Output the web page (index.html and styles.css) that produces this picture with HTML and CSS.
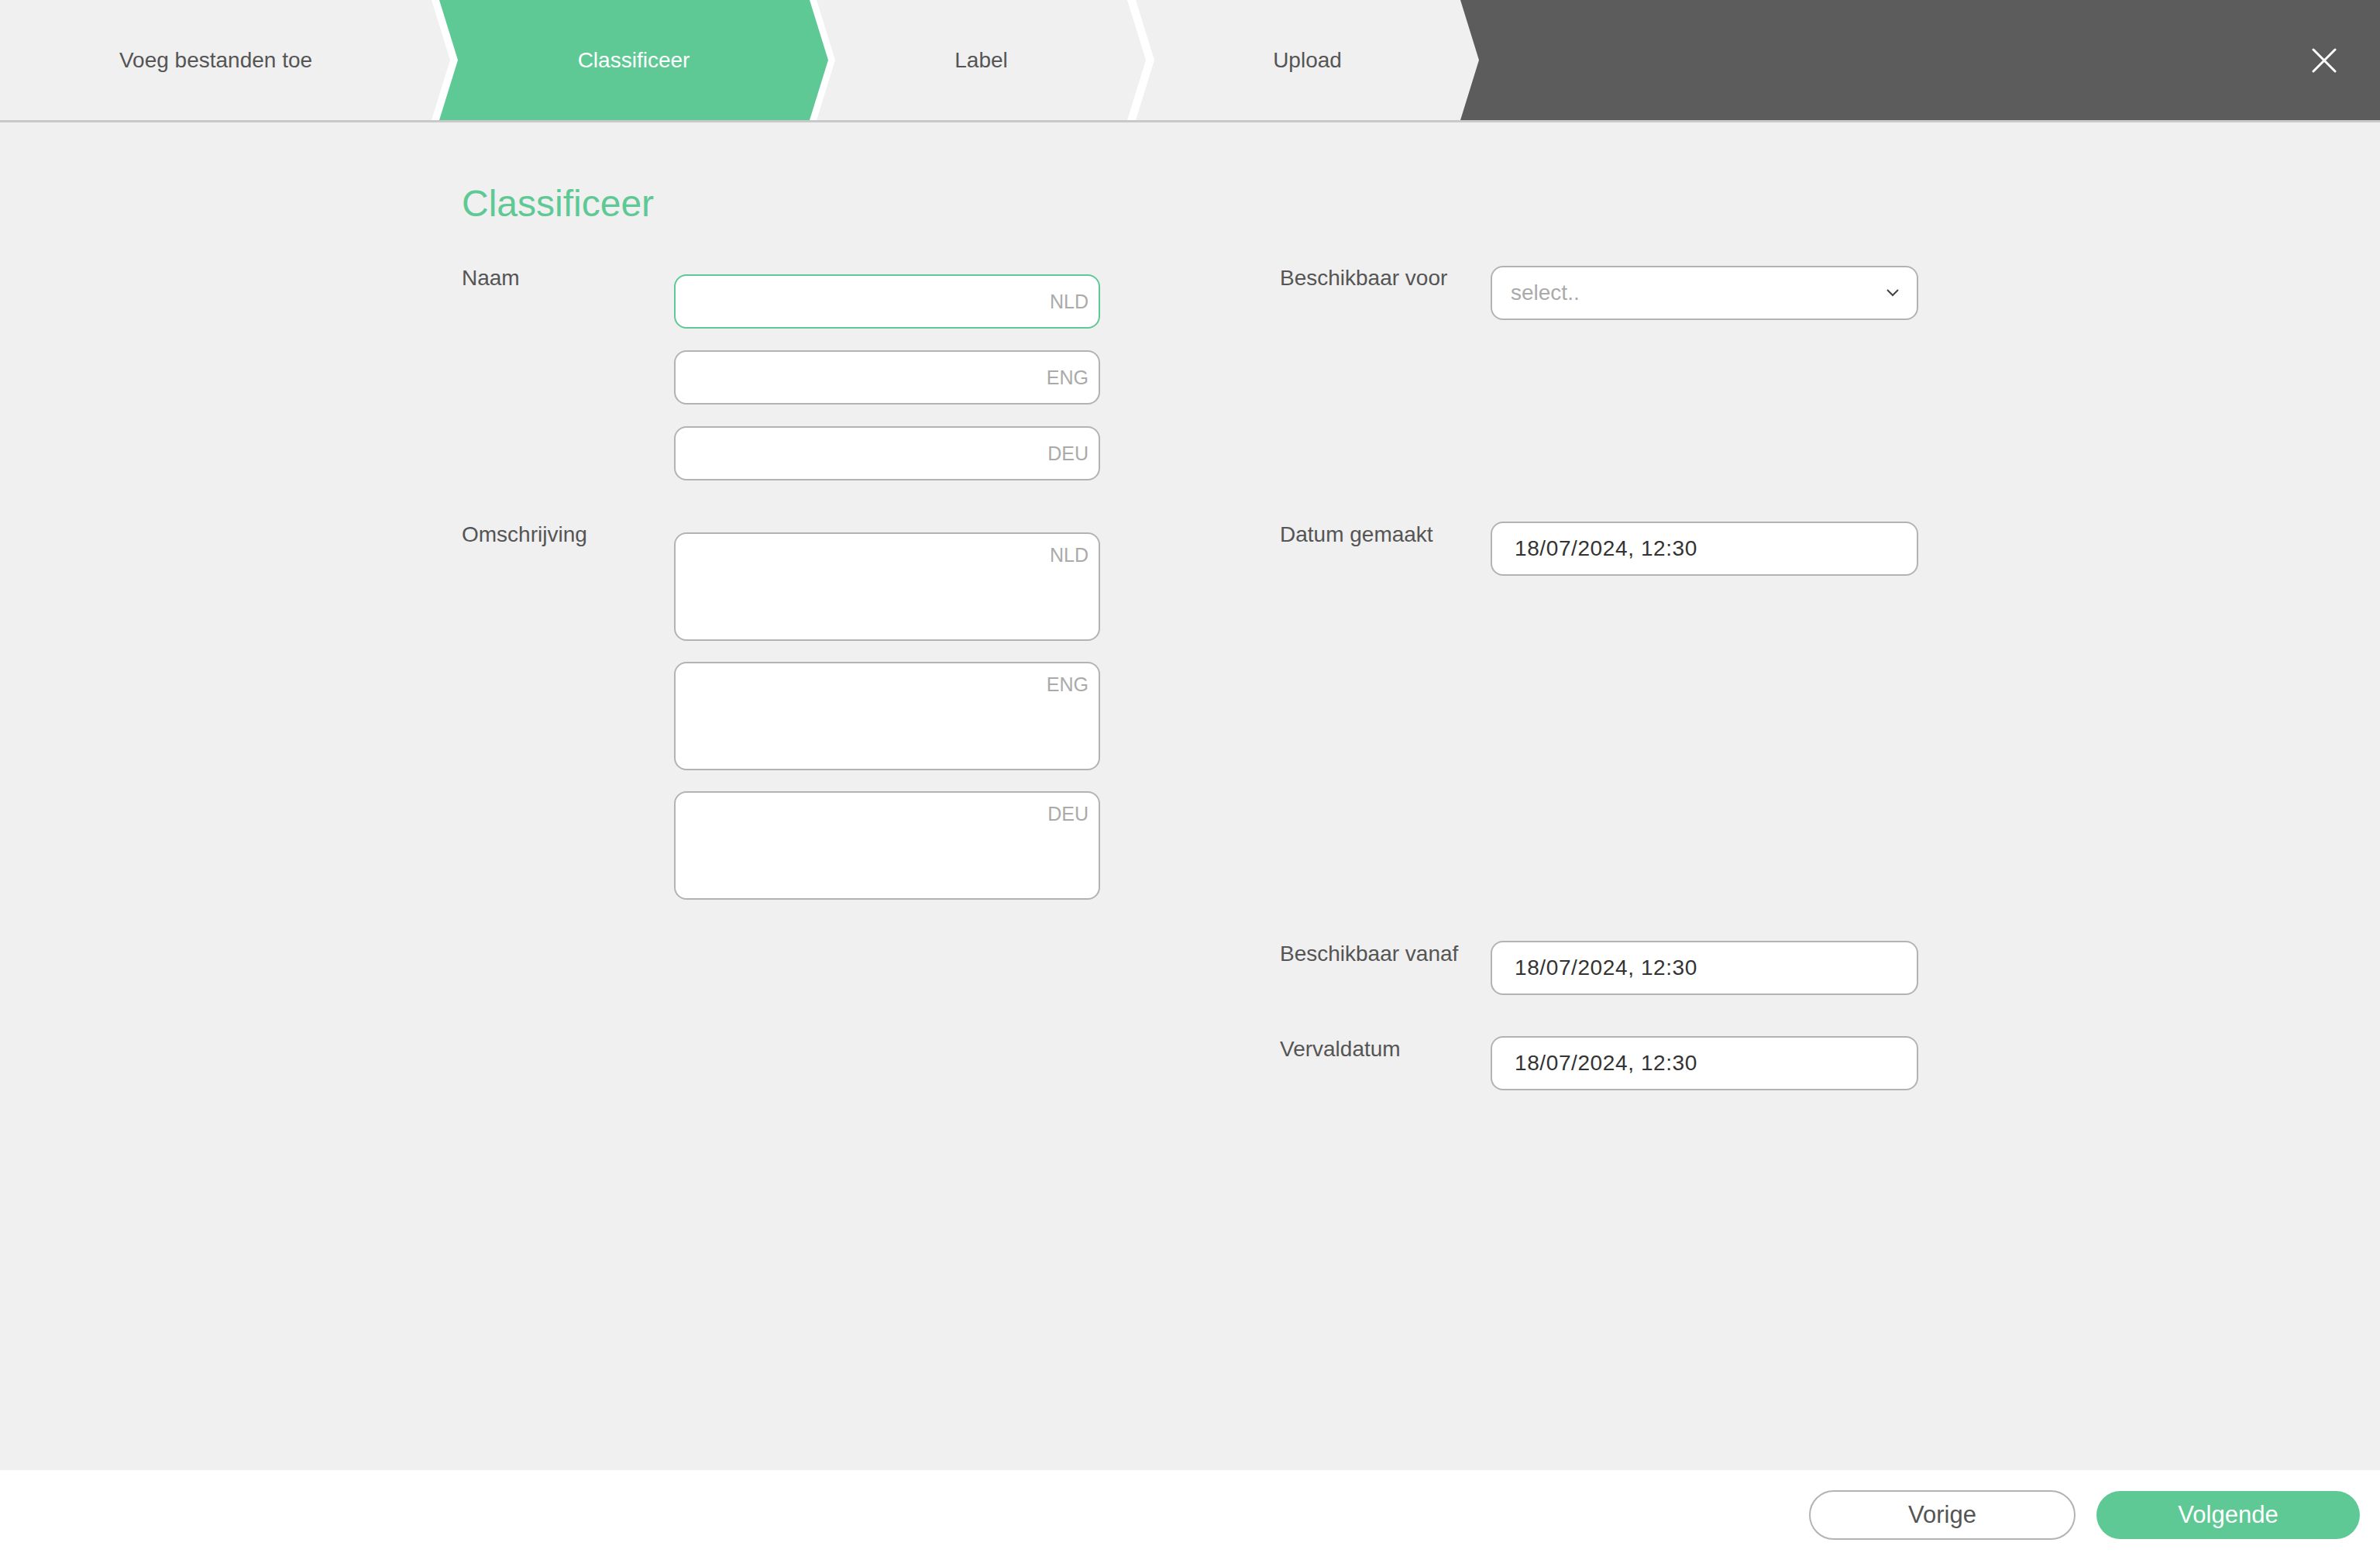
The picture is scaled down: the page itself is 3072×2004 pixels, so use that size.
FILE: index.html
```html
<!DOCTYPE html>
<html lang="nl">
<head>
    <meta charset="UTF-8" />
    <meta name="viewport" content="width=device-width, initial-scale=1.0"/>
    <title>Classificeer</title>
    <link rel="stylesheet" href="styles.css">
</head>
<body>
<div class="wizard">

    <!-- stappen -->
    <div class="steps">
        <div class="step step-first">Voeg bestanden toe</div>
        <div class="step step-active">Classificeer</div>
        <div class="step step-label">Label</div>
        <div class="step step-upload">Upload</div>
        <div class="steps-end">
            <button class="close-btn" aria-label="Sluiten">
                <svg width="32" height="32" viewBox="0 0 32 32">
                    <path d="M2 2 L30 30 M30 2 L2 30" stroke="#fff" stroke-width="3" stroke-linecap="round" fill="none"/>
                </svg>
            </button>
        </div>
    </div>

    <!-- formulier -->
    <div class="content">
        <div class="container">
            <h2 class="page-title">Classificeer</h2>

            <div class="form-grid">
                <div class="form-col">
                    <div class="field-row">
                        <label class="field-label">Naam</label>
                        <div class="field-stack stack-naam">
                            <input class="field field-focus" type="text" placeholder="NLD">
                            <input class="field" type="text" placeholder="ENG">
                            <input class="field" type="text" placeholder="DEU">
                        </div>
                    </div>
                    <div class="field-row row-omschrijving">
                        <label class="field-label">Omschrijving</label>
                        <div class="field-stack stack-omschrijving">
                            <textarea class="field field-area" placeholder="NLD"></textarea>
                            <textarea class="field field-area" placeholder="ENG"></textarea>
                            <textarea class="field field-area" placeholder="DEU"></textarea>
                        </div>
                    </div>
                </div>

                <div class="form-col">
                    <div class="field-row field-row-right">
                        <label class="field-label">Beschikbaar voor</label>
                        <div class="select-box">
                            <span>select..</span>
                            <svg width="16" height="10" viewBox="0 0 16 10">
                                <path d="M1 1 L8 8 L15 1" stroke="#444" stroke-width="2" fill="none"/>
                            </svg>
                        </div>
                    </div>
                    <div class="field-row field-row-right row-datum">
                        <label class="field-label">Datum gemaakt</label>
                        <input class="field field-date" type="text" value="18/07/2024, 12:30">
                    </div>
                    <div class="field-row field-row-right row-vanaf">
                        <label class="field-label">Beschikbaar vanaf</label>
                        <input class="field field-date" type="text" value="18/07/2024, 12:30">
                    </div>
                    <div class="field-row field-row-right row-verval">
                        <label class="field-label">Vervaldatum</label>
                        <input class="field field-date" type="text" value="18/07/2024, 12:30">
                    </div>
                </div>
            </div>
        </div>
    </div>

    <!-- knoppen -->
    <div class="footer">
        <button class="btn btn-prev">Vorige</button>
        <button class="btn btn-next">Volgende</button>
    </div>
</div>
</body>
</html>
```

FILE: styles.css
```css
/* wizard: classificeer */
*{box-sizing:border-box;}
body{margin:0;background:#f0f0f0;font-family:"Liberation Sans",Arial,sans-serif;color:#555;}
.wizard{display:flex;flex-direction:column;height:100vh;}

/* stappenbalk */
.steps{display:flex;height:158px;background:#fff;border-bottom:3px solid #c9c9c9;}
.step{display:flex;align-items:center;justify-content:center;background:#f0f0f0;font-size:28px;color:#555;
    clip-path:polygon(0 0,calc(100% - 24px) 0,100% 50%,calc(100% - 24px) 100%,0 100%,24px 50%);}
.step-first{width:581px;padding-right:24px;clip-path:polygon(0 0,calc(100% - 24px) 0,100% 50%,calc(100% - 24px) 100%,0 100%);}
.step-active{width:502px;margin-left:-14px;background:#5ec994;color:#fff;}
.step-label{width:425px;margin-left:-15px;}
.step-upload{width:443px;margin-left:-13px;clip-path:polygon(0 0,100% 0,100% 100%,0 100%,24px 50%);}
.steps-end{flex:1;margin-left:-24px;background:#5c5c5c;display:flex;align-items:center;justify-content:flex-end;padding-right:56px;
    clip-path:polygon(0 0,100% 0,100% 100%,0 100%,24px 50%);}
.close-btn{background:none;border:0;padding:0;display:flex;cursor:pointer;}

/* inhoud */
.content{flex:1;padding-top:77px;}
.container{width:1880px;margin:0 auto;}
.page-title{margin:0;font-size:48px;line-height:56px;font-weight:400;color:#5ec994;}
.form-grid{display:grid;grid-template-columns:824px 824px;column-gap:232px;margin-top:51px;}
.field-row{display:grid;grid-template-columns:274px 550px;align-items:start;}
.field-row-right{grid-template-columns:272px 552px;}
.field-label{font-size:28px;line-height:34px;color:#555;}
.field-stack{display:flex;flex-direction:column;gap:28px;}
.stack-naam{margin-top:12px;}
.row-omschrijving{margin-top:53px;}
.stack-omschrijving{margin-top:14px;gap:27px;}
.row-datum{margin-top:260px;}
.row-vanaf{margin-top:471px;}
.row-verval{margin-top:53px;}

.field{width:100%;height:70px;background:#fff;border:2px solid #b3b3b3;border-radius:16px;font-family:inherit;font-size:25px;color:#333;padding:0 13px;text-align:right;outline:none;}
.field-focus{border-color:#5ec994;}
.field::placeholder{color:#aaa;opacity:1;}
.field-area{height:140px;resize:none;padding:12px 13px;line-height:30px;display:block;}
.field-date{text-align:left;font-size:28px;padding-left:29px;letter-spacing:.6px;color:#333;}
.select-box{height:70px;margin-top:1px;background:#fff;border:2px solid #b3b3b3;border-radius:16px;display:flex;align-items:center;justify-content:space-between;padding:0 23px 0 24px;font-size:28px;color:#aaa;}

/* voettekst */
.footer{height:107px;background:#fff;display:flex;justify-content:flex-end;align-items:flex-start;gap:27px;padding:26px 26px 0 0;}
.btn{font-family:inherit;font-size:31px;border-radius:40px;cursor:pointer;}
.btn-prev{width:344px;height:64px;background:#fff;border:2px solid #b3b3b3;color:#555;}
.btn-next{width:340px;height:62px;margin-top:1px;background:#5ec994;border:0;color:#fff;}
```
